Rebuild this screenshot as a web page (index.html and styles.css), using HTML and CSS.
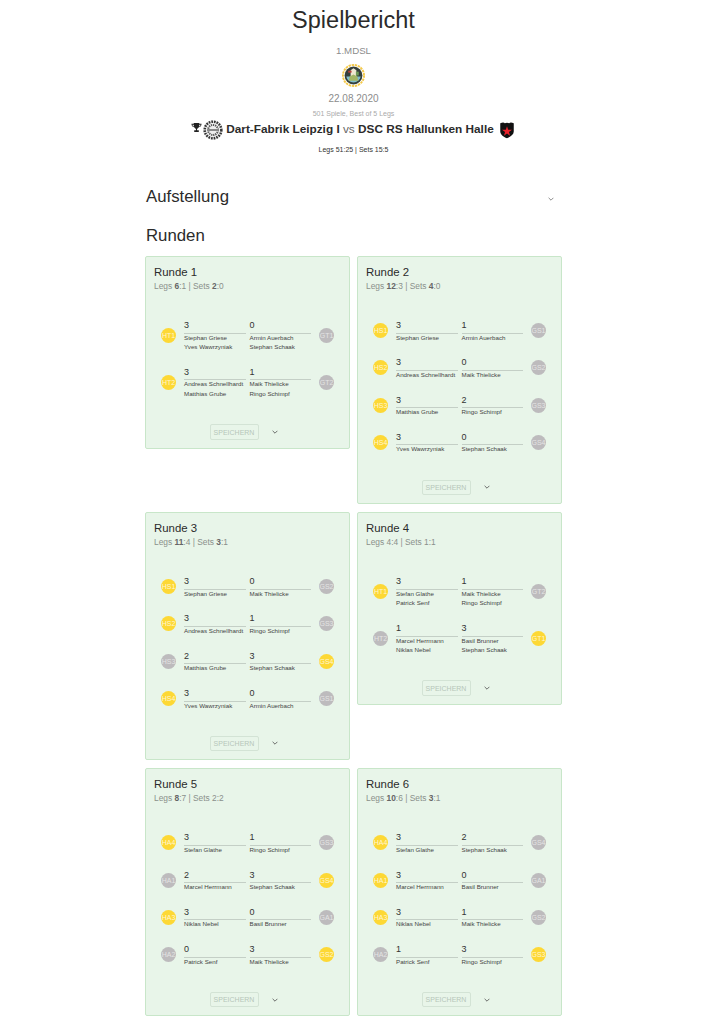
FILE: index.html
```html
<!DOCTYPE html>
<html lang="de">
  <head>
    <meta charset="UTF-8" />
    <meta name="viewport" content="width=device-width, initial-scale=1.0" />
    <title>Spielbericht</title>
    <link rel="stylesheet" href="styles.css">
  </head>
  <body>
    <div class="container">
      <header class="head">
        <h1>Spielbericht</h1>
        <div class="league">1.MDSL</div>
        <svg class="league-logo" viewBox="0 0 24 24">
          <circle cx="12" cy="12" r="11" fill="none" stroke="#f4c94a" stroke-width="2" stroke-dasharray="2.500 .8" />
          <circle cx="12" cy="12" r="9.300" fill="#353f3b" />
          <path d="M4.500 13h15a7.600 7.600 0 0 1-15 0z" fill="#7fbccb" />
          <path d="M9 6.500l3-2 3 2V13H9z" fill="#efe9d2" />
          <rect x="6.500" y="7" width="3.500" height="2" fill="#b8413a" />
          <rect x="14.500" y="8" width="3" height="4" fill="#6d9a58" />
          <path d="M8 13l4-2 4 2 1 4.500H7z" fill="#a3b765" />
        </svg>
        <div class="date">22.08.2020</div>
        <div class="mode">501 Spiele, Best of 5 Legs</div>
        <div class="teams">
          <svg class="trophy" viewBox="0 0 12 12">
            <path d="M3 1h6v1h2.500c0 2.200-1 3.500-3 3.800C8 6.800 7.200 7.300 6.600 7.500V9H8.500v2h-5V9h1.900V7.500C4.800 7.300 4 6.800 3.500 5.800 1.500 5.500.5 4.200.5 2H3zM1.500 3c.1 1 .6 1.600 1.600 1.800L3 3zM10.500 3H9l-.1 1.800c1-.2 1.500-.8 1.600-1.800z" fill="#222" />
          </svg>
          <svg class="club" viewBox="0 0 24 24">
            <circle cx="12" cy="12" r="12" fill="#eee" />
            <circle cx="12" cy="12" r="10" fill="none" stroke="#333" stroke-width="3" stroke-dasharray="2 1.200" />
            <circle cx="12" cy="12" r="6" fill="none" stroke="#555" stroke-width="2.400" stroke-dasharray="1.500 1" />
            <rect x="5" y="10.800" width="14" height="2.400" fill="#888" />
          </svg>
          <span class="team-names"><b>Dart-Fabrik Leipzig I</b> <span class="vs">vs</span> <b>DSC RS Hallunken Halle</b></span>
          <svg class="club shield" viewBox="0 0 24 24">
            <path d="M3 3c3-1.500 5-1.500 6 0 2-1 4-1 6 0 1-1.500 3-1.500 6 0v11c0 4-4 7-9 9-5-2-9-5-9-9z" fill="#111" />
            <path d="M12 7l1.600 4.800h5l-4 3 1.500 4.800-4.100-3-4.100 3 1.500-4.800-4-3h5z" fill="#e8212b" />
          </svg>
        </div>
        <div class="total">Legs 51:25 | Sets 15:5</div>
      </header>

      <div class="section-row">
        <h2>Aufstellung</h2>
        <svg class="chev small" viewBox="0 0 10 6"><path d="M1 1l4 4 4-4" /></svg>
      </div>
      <h2 class="runden">Runden</h2>

      <div class="grid">
        <div class="card">
          <h3>Runde 1</h3>
          <div class="sub">Legs <b>6</b>:1 | Sets <b>2</b>:0</div>
          <div class="rows">
            <div class="row">
              <span class="dot win">HT1</span>
              <div class="side"><div class="score">3</div><div class="name">Stephan Griese</div><div class="name">Yves Wawrzyniak</div></div>
              <div class="side"><div class="score">0</div><div class="name">Armin Auerbach</div><div class="name">Stephan Schaak</div></div>
              <span class="dot">GT1</span>
            </div>
            <div class="row">
              <span class="dot win">HT2</span>
              <div class="side"><div class="score">3</div><div class="name">Andreas Schnellhardt</div><div class="name">Matthias Grube</div></div>
              <div class="side"><div class="score">1</div><div class="name">Maik Thielicke</div><div class="name">Ringo Schimpf</div></div>
              <span class="dot">GT2</span>
            </div>
          </div>
          <div class="actions">
            <button class="save" disabled>SPEICHERN</button>
            <svg class="chev" viewBox="0 0 10 6"><path d="M1 1l4 4 4-4" /></svg>
          </div>
        </div>

        <div class="card">
          <h3>Runde 2</h3>
          <div class="sub">Legs <b>12</b>:3 | Sets <b>4</b>:0</div>
          <div class="rows">
            <div class="row">
              <span class="dot win">HS1</span>
              <div class="side"><div class="score">3</div><div class="name">Stephan Griese</div></div>
              <div class="side"><div class="score">1</div><div class="name">Armin Auerbach</div></div>
              <span class="dot">GS1</span>
            </div>
            <div class="row">
              <span class="dot win">HS2</span>
              <div class="side"><div class="score">3</div><div class="name">Andreas Schnellhardt</div></div>
              <div class="side"><div class="score">0</div><div class="name">Maik Thielicke</div></div>
              <span class="dot">GS2</span>
            </div>
            <div class="row">
              <span class="dot win">HS3</span>
              <div class="side"><div class="score">3</div><div class="name">Matthias Grube</div></div>
              <div class="side"><div class="score">2</div><div class="name">Ringo Schimpf</div></div>
              <span class="dot">GS3</span>
            </div>
            <div class="row">
              <span class="dot win">HS4</span>
              <div class="side"><div class="score">3</div><div class="name">Yves Wawrzyniak</div></div>
              <div class="side"><div class="score">0</div><div class="name">Stephan Schaak</div></div>
              <span class="dot">GS4</span>
            </div>
          </div>
          <div class="actions">
            <button class="save" disabled>SPEICHERN</button>
            <svg class="chev" viewBox="0 0 10 6"><path d="M1 1l4 4 4-4" /></svg>
          </div>
        </div>

        <div class="card">
          <h3>Runde 3</h3>
          <div class="sub">Legs <b>11</b>:4 | Sets <b>3</b>:1</div>
          <div class="rows">
            <div class="row">
              <span class="dot win">HS1</span>
              <div class="side"><div class="score">3</div><div class="name">Stephan Griese</div></div>
              <div class="side"><div class="score">0</div><div class="name">Maik Thielicke</div></div>
              <span class="dot">GS2</span>
            </div>
            <div class="row">
              <span class="dot win">HS2</span>
              <div class="side"><div class="score">3</div><div class="name">Andreas Schnellhardt</div></div>
              <div class="side"><div class="score">1</div><div class="name">Ringo Schimpf</div></div>
              <span class="dot">GS3</span>
            </div>
            <div class="row">
              <span class="dot">HS3</span>
              <div class="side"><div class="score">2</div><div class="name">Matthias Grube</div></div>
              <div class="side"><div class="score">3</div><div class="name">Stephan Schaak</div></div>
              <span class="dot win">GS4</span>
            </div>
            <div class="row">
              <span class="dot win">HS4</span>
              <div class="side"><div class="score">3</div><div class="name">Yves Wawrzyniak</div></div>
              <div class="side"><div class="score">0</div><div class="name">Armin Auerbach</div></div>
              <span class="dot">GS1</span>
            </div>
          </div>
          <div class="actions">
            <button class="save" disabled>SPEICHERN</button>
            <svg class="chev" viewBox="0 0 10 6"><path d="M1 1l4 4 4-4" /></svg>
          </div>
        </div>

        <div class="card">
          <h3>Runde 4</h3>
          <div class="sub">Legs 4:4 | Sets 1:1</div>
          <div class="rows">
            <div class="row">
              <span class="dot win">HT1</span>
              <div class="side"><div class="score">3</div><div class="name">Stefan Glathe</div><div class="name">Patrick Senf</div></div>
              <div class="side"><div class="score">1</div><div class="name">Maik Thielicke</div><div class="name">Ringo Schimpf</div></div>
              <span class="dot">GT2</span>
            </div>
            <div class="row">
              <span class="dot">HT2</span>
              <div class="side"><div class="score">1</div><div class="name">Marcel Herrmann</div><div class="name">Niklas Nebel</div></div>
              <div class="side"><div class="score">3</div><div class="name">Basil Brunner</div><div class="name">Stephan Schaak</div></div>
              <span class="dot win">GT1</span>
            </div>
          </div>
          <div class="actions">
            <button class="save" disabled>SPEICHERN</button>
            <svg class="chev" viewBox="0 0 10 6"><path d="M1 1l4 4 4-4" /></svg>
          </div>
        </div>

        <div class="card">
          <h3>Runde 5</h3>
          <div class="sub">Legs <b>8</b>:7 | Sets 2:2</div>
          <div class="rows">
            <div class="row">
              <span class="dot win">HA4</span>
              <div class="side"><div class="score">3</div><div class="name">Stefan Glathe</div></div>
              <div class="side"><div class="score">1</div><div class="name">Ringo Schimpf</div></div>
              <span class="dot">GS3</span>
            </div>
            <div class="row">
              <span class="dot">HA1</span>
              <div class="side"><div class="score">2</div><div class="name">Marcel Herrmann</div></div>
              <div class="side"><div class="score">3</div><div class="name">Stephan Schaak</div></div>
              <span class="dot win">GS4</span>
            </div>
            <div class="row">
              <span class="dot win">HA3</span>
              <div class="side"><div class="score">3</div><div class="name">Niklas Nebel</div></div>
              <div class="side"><div class="score">0</div><div class="name">Basil Brunner</div></div>
              <span class="dot">GA1</span>
            </div>
            <div class="row">
              <span class="dot">HA2</span>
              <div class="side"><div class="score">0</div><div class="name">Patrick Senf</div></div>
              <div class="side"><div class="score">3</div><div class="name">Maik Thielicke</div></div>
              <span class="dot win">GS2</span>
            </div>
          </div>
          <div class="actions">
            <button class="save" disabled>SPEICHERN</button>
            <svg class="chev" viewBox="0 0 10 6"><path d="M1 1l4 4 4-4" /></svg>
          </div>
        </div>

        <div class="card">
          <h3>Runde 6</h3>
          <div class="sub">Legs <b>10</b>:6 | Sets <b>3</b>:1</div>
          <div class="rows">
            <div class="row">
              <span class="dot win">HA4</span>
              <div class="side"><div class="score">3</div><div class="name">Stefan Glathe</div></div>
              <div class="side"><div class="score">2</div><div class="name">Stephan Schaak</div></div>
              <span class="dot">GS4</span>
            </div>
            <div class="row">
              <span class="dot win">HA1</span>
              <div class="side"><div class="score">3</div><div class="name">Marcel Herrmann</div></div>
              <div class="side"><div class="score">0</div><div class="name">Basil Brunner</div></div>
              <span class="dot">GA1</span>
            </div>
            <div class="row">
              <span class="dot win">HA3</span>
              <div class="side"><div class="score">3</div><div class="name">Niklas Nebel</div></div>
              <div class="side"><div class="score">1</div><div class="name">Maik Thielicke</div></div>
              <span class="dot">GS2</span>
            </div>
            <div class="row">
              <span class="dot">HA2</span>
              <div class="side"><div class="score">1</div><div class="name">Patrick Senf</div></div>
              <div class="side"><div class="score">3</div><div class="name">Ringo Schimpf</div></div>
              <span class="dot win">GS3</span>
            </div>
          </div>
          <div class="actions">
            <button class="save" disabled>SPEICHERN</button>
            <svg class="chev" viewBox="0 0 10 6"><path d="M1 1l4 4 4-4" /></svg>
          </div>
        </div>
      </div>
    </div>
  </body>
</html>
```

FILE: styles.css
```css
* {
  box-sizing: border-box;
}
body {
  margin: 0;
  background-color: #fff;
  color: #2b2b2b;
  font-family: "Liberation Sans", Arial, sans-serif;
}
.container {
  width: 417px;
  margin: 0 auto;
}
.head {
  display: flex;
  flex-direction: column;
  align-items: center;
  height: 170px;
}
h1 {
  margin: 0;
  height: 40px;
  font-size: 23.5px;
  font-weight: 400;
  line-height: 40px;
}
.league {
  margin-top: 5px;
  height: 12px;
  color: #8c8c8c;
  font-size: 9.7px;
  line-height: 12px;
}
.league-logo {
  margin-top: 7px;
  width: 23px;
  height: 23px;
}
.date {
  margin-top: 6px;
  height: 12px;
  color: #8c8c8c;
  font-size: 10px;
  line-height: 12px;
}
.mode {
  margin-top: 4px;
  height: 10px;
  color: #aaa;
  font-size: 7px;
  line-height: 10px;
}
.teams {
  display: flex;
  align-items: center;
  margin-top: 1px;
  height: 20px;
}
.trophy {
  width: 11px;
  height: 11px;
  margin-top: -5px;
}
.club {
  width: 20px;
  height: 20px;
  margin-left: 1px;
}
.shield {
  width: 18px;
  height: 18px;
  margin-left: 4px;
}
.team-names {
  margin-top: -2px;
  margin-left: 3px;
  font-size: 11.8px;
  white-space: nowrap;
}
.vs {
  color: #666;
}
.total {
  margin-top: 5px;
  height: 10px;
  color: #333;
  font-size: 7px;
  line-height: 10px;
}
h2 {
  margin: 0;
  font-size: 16.8px;
  font-weight: 400;
  line-height: 22px;
}
.section-row {
  display: flex;
  justify-content: space-between;
  align-items: center;
  margin-top: 16px;
  padding-left: 1px;
  padding-right: 8px;
}
.runden {
  margin-top: 17px;
  padding-left: 1px;
  height: 22px;
}
.chev {
  width: 6px;
  height: 4px;
  fill: none;
  stroke: #555;
  stroke-width: 1.4;
}
.chev.small {
  margin-top: 4px;
  stroke: #777;
}
.grid {
  display: grid;
  grid-template-columns: 205px 205px;
  justify-content: space-between;
  align-items: start;
  row-gap: 8px;
  margin-top: 9px;
}
.card {
  background-color: #e8f5e9;
  border: 1px solid #c8e6c9;
  border-radius: 2px;
  padding: 8px 0;
}
h3 {
  margin: 0;
  padding-left: 8px;
  font-size: 11.4px;
  font-weight: 400;
  line-height: 14px;
}
.sub {
  margin-top: 1px;
  padding-left: 8px;
  color: #8a908b;
  font-size: 8.4px;
  line-height: 13px;
}
.sub b {
  color: #666;
}
.rows {
  margin-top: 23px;
}
.row {
  display: grid;
  grid-template-columns: 19px 61.5px 61.5px 19px;
  column-gap: 4px;
  align-items: center;
  padding: 0 15px;
  margin-bottom: 8.16px;
}
.side {
  padding-bottom: 2px;
}
.score {
  height: 17.5px;
  border-bottom: 1px solid #c4cfc6;
  color: #333;
  font-size: 9px;
  line-height: 19px;
}
.name {
  height: 9.67px;
  color: #444;
  font-size: 6.2px;
  line-height: 8px;
  white-space: nowrap;
}
.dot {
  display: flex;
  justify-content: center;
  align-items: center;
  width: 15px;
  height: 15px;
  border-radius: 50%;
  background-color: #bdbbbd;
  color: #e4e4e4;
  font-size: 7px;
}
.row .dot:last-child {
  justify-self: end;
}
.dot.win {
  background-color: #fdd835;
  color: #fff6d0;
}
.actions {
  display: flex;
  justify-content: center;
  align-items: center;
  gap: 13px;
  margin-top: 22.5px;
  padding-right: 8px;
}
.save {
  width: 49px;
  height: 15.5px;
  padding: 0;
  background: transparent;
  border: 1px solid #d3e3d5;
  border-radius: 2px;
  color: #b6c6b9;
  font-family: inherit;
  font-size: 7px;
}
```
